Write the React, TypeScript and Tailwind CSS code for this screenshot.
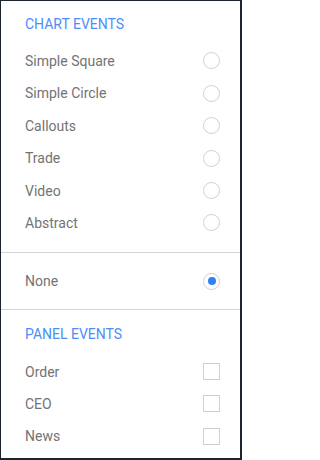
import React from "react";

const chart = ["Simple Square", "Simple Circle", "Callouts", "Trade", "Video", "Abstract"];
const panel = ["Order", "CEO", "News"];

function Radio({ checked }: { checked?: boolean }) {
  return (
    <span className="flex items-center justify-center w-[17px] h-[17px] rounded-full border border-[#cfcfcf] bg-white">
      {checked && <span className="block w-[8px] h-[8px] rounded-full bg-[#2f80f5]" />}
    </span>
  );
}

function Check() {
  return <span className="block w-[17px] h-[17px] border border-[#cfcfcf] bg-white" />;
}

function Row({ label, children }: { label: string; children: React.ReactNode }) {
  return (
    <div className="flex items-center justify-between h-[32.4px] pl-[24px] pr-[20px]">
      <span className="text-[14px] leading-[16px] text-[#737373]">{label}</span>
      {children}
    </div>
  );
}

export default function App() {
  return (
    <div className="w-[242px] h-[460px] bg-[#1c252e] pl-[1px] pt-[1px] pr-[2px] pb-[2px]" style={{ fontFamily: "Roboto, 'Liberation Sans', sans-serif" }}>
      <div className="w-full h-full bg-white flex flex-col">
        <div className="pt-[15px] pb-[12.8px]">
          <div className="pl-[24px] text-[14px] leading-[16px] font-normal text-[#4b8ef7] uppercase">Chart Events</div>
          <div className="mt-[12.8px]">
            {chart.map((c) => (
              <Row key={c} label={c}>
                <Radio />
              </Row>
            ))}
          </div>
        </div>
        <div className="h-px bg-[#d4d4d4]" />
        <div className="py-[12px]">
          <Row label="None">
            <Radio checked />
          </Row>
        </div>
        <div className="h-px bg-[#d4d4d4]" />
        <div className="pt-[15.5px]">
          <div className="pl-[24px] text-[14px] leading-[16px] font-normal text-[#4b8ef7] uppercase">Panel Events</div>
          <div className="mt-[13.5px]">
            {panel.map((c) => (
              <Row key={c} label={c}>
                <Check />
              </Row>
            ))}
          </div>
        </div>
      </div>
    </div>
  );
}
